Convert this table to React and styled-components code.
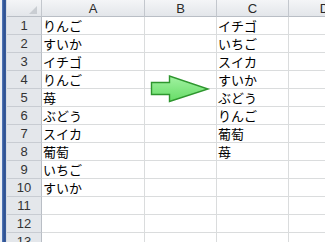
import React from "react";
import styled, { createGlobalStyle } from "styled-components";

const Global = createGlobalStyle`
  html, body { margin: 0; padding: 0; background: #ffffff; overflow: hidden; }
  #root { width: 325px; height: 242px; }
`;

const Frame = styled.div`
  position: relative;
  display: flex;
  width: 325px;
  height: 242px;
  overflow: hidden;
  font-family: "Noto Sans CJK JP", "Noto Sans", sans-serif;
`;

const EdgeStrip = styled.div`
  flex: 0 0 7px;
  background: linear-gradient(
    to right,
    #eef1f5 0 2px,
    #5a7fbf 2px,
    #2c4f8f 4px,
    #3c5f9f 6px,
    #d7dce3 6px
  );
`;

const Sheet = styled.div`
  flex: 0 0 auto;
  display: grid;
  grid-template-columns: 35px 103px 72px 72px 72px;
  grid-template-rows: 17px;
  grid-auto-rows: 18px;
`;

const HeadCell = styled.div`
  box-sizing: border-box;
  display: flex;
  align-items: center;
  justify-content: center;
  background: linear-gradient(#f4f5f7, #e3e6ea);
  border-right: 1px solid #c3c7cd;
  border-bottom: 1px solid #b9bec5;
  font-family: "Liberation Sans", Arial, sans-serif;
  font-size: 13px;
  color: #2a2a2a;
  padding-top: 1px;
`;

const Corner = styled(HeadCell)`
  position: relative;
  &::after {
    content: "";
    position: absolute;
    right: 4px;
    bottom: 2px;
    width: 0;
    height: 0;
    border-left: 8px solid transparent;
    border-bottom: 8px solid #c9cdd2;
  }
`;

const RowNum = styled.div`
  box-sizing: border-box;
  display: flex;
  align-items: flex-end;
  justify-content: center;
  padding-bottom: 1px;
  background: #e4e7eb;
  border-right: 1px solid #b9bec5;
  border-bottom: 1px solid #c8ccd2;
  font-family: "Liberation Sans", Arial, sans-serif;
  font-size: 13px;
  line-height: 15px;
  color: #333333;
`;

const Cell = styled.div`
  box-sizing: border-box;
  display: flex;
  align-items: flex-end;
  padding: 0 0 1px 1px;
  background: #ffffff;
  border-right: 1px solid #dadcdd;
  border-bottom: 1px solid #dadcdd;
  font-size: 13px;
  line-height: 15px;
  color: #000000;
  white-space: nowrap;
  overflow: hidden;
`;

const Arrow = styled.svg`
  position: absolute;
  left: 148px;
  top: 73px;
  width: 64px;
  height: 32px;
`;

const colA = ["りんご", "すいか", "イチゴ", "りんご", "苺", "ぶどう", "スイカ", "葡萄", "いちご", "すいか", "", "", ""];
const colC = ["イチゴ", "いちご", "スイカ", "すいか", "ぶどう", "りんご", "葡萄", "苺", "", "", "", "", ""];

export default function App() {
  return (
    <>
      <Global />
      <Frame>
        <EdgeStrip />
        <Sheet>
          <Corner />
          <HeadCell>A</HeadCell>
          <HeadCell>B</HeadCell>
          <HeadCell>C</HeadCell>
          <HeadCell>D</HeadCell>
          {colA.map((a, i) => (
            <React.Fragment key={i}>
              <RowNum>{i + 1}</RowNum>
              <Cell>{a}</Cell>
              <Cell />
              <Cell>{colC[i]}</Cell>
              <Cell />
            </React.Fragment>
          ))}
        </Sheet>
        <Arrow viewBox="0 0 64 32">
          <defs>
            <linearGradient id="arrowFill" x1="0" y1="0" x2="0" y2="1">
              <stop offset="0" stopColor="#a2f2a2" />
              <stop offset="1" stopColor="#66dc66" />
            </linearGradient>
          </defs>
          <polygon
            points="3.5,9.5 21.5,9.5 21.5,3 60,16 21.5,28.5 21.5,21.5 3.5,21.5"
            fill="url(#arrowFill)"
            stroke="#2e962e"
            strokeWidth="1.4"
            strokeLinejoin="miter"
          />
        </Arrow>
      </Frame>
    </>
  );
}
